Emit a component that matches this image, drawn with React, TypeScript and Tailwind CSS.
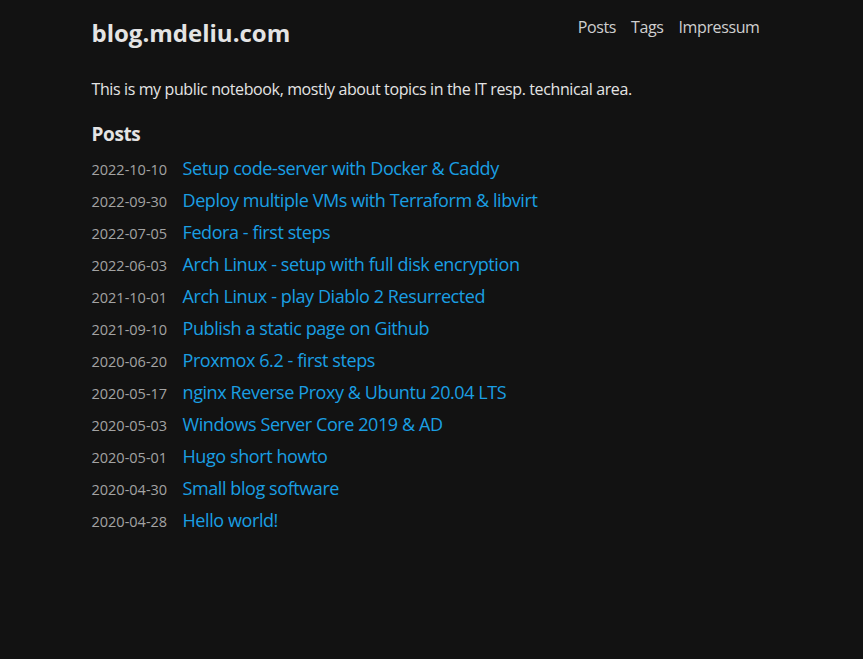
import React from "react";

const posts = [
  { date: "2022-10-10", title: "Setup code-server with Docker & Caddy" },
  { date: "2022-09-30", title: "Deploy multiple VMs with Terraform & libvirt" },
  { date: "2022-07-05", title: "Fedora - first steps" },
  { date: "2022-06-03", title: "Arch Linux - setup with full disk encryption" },
  { date: "2021-10-01", title: "Arch Linux - play Diablo 2 Resurrected" },
  { date: "2021-09-10", title: "Publish a static page on Github" },
  { date: "2020-06-20", title: "Proxmox 6.2 - first steps" },
  { date: "2020-05-17", title: "nginx Reverse Proxy & Ubuntu 20.04 LTS" },
  { date: "2020-05-03", title: "Windows Server Core 2019 & AD" },
  { date: "2020-05-01", title: "Hugo short howto" },
  { date: "2020-04-30", title: "Small blog software" },
  { date: "2020-04-28", title: "Hello world!" },
];

const App = () => {
  return (
    <div className="min-h-screen bg-[#121212] text-[#e4e4e4] font-['Open_Sans',sans-serif]">
      <div className="mx-auto w-[680px] pt-[16px]">
        {/* Header */}
        <header className="flex items-start justify-between">
          <a href="#" className="text-[24px] font-bold leading-[34px] text-[#e4e4e4]">
            blog.mdeliu.com
          </a>
          <nav className="flex items-center gap-[15px] mr-[12px] -mt-[1px] text-[16px] leading-[24px] tracking-[-0.024em] text-[#cfcfcf]">
            <a href="#">Posts</a>
            <a href="#">Tags</a>
            <a href="#">Impressum</a>
          </nav>
        </header>

        <p className="mt-[28px] text-[16px] leading-[22px] tracking-[-0.024em]">
          This is my public notebook, mostly about topics in the IT resp. technical area.
        </p>

        {/* Posts */}
        <h2 className="mt-[21px] text-[19px] font-bold leading-[26px] tracking-[-0.02em]">Posts</h2>
        <ul className="mt-[5px]">
          {posts.map((p) => (
            <li key={p.date} className="flex items-baseline h-[32px] pt-[4px]">
              <span className="w-[91px] shrink-0 text-[14.5px] text-[#a3a3a3]">{p.date}</span>
              <a href="#" className="text-[18px] leading-[24px] tracking-[-0.023em] text-[#1a9fe3]">
                {p.title}
              </a>
            </li>
          ))}
        </ul>
      </div>
    </div>
  );
};

export default App;
